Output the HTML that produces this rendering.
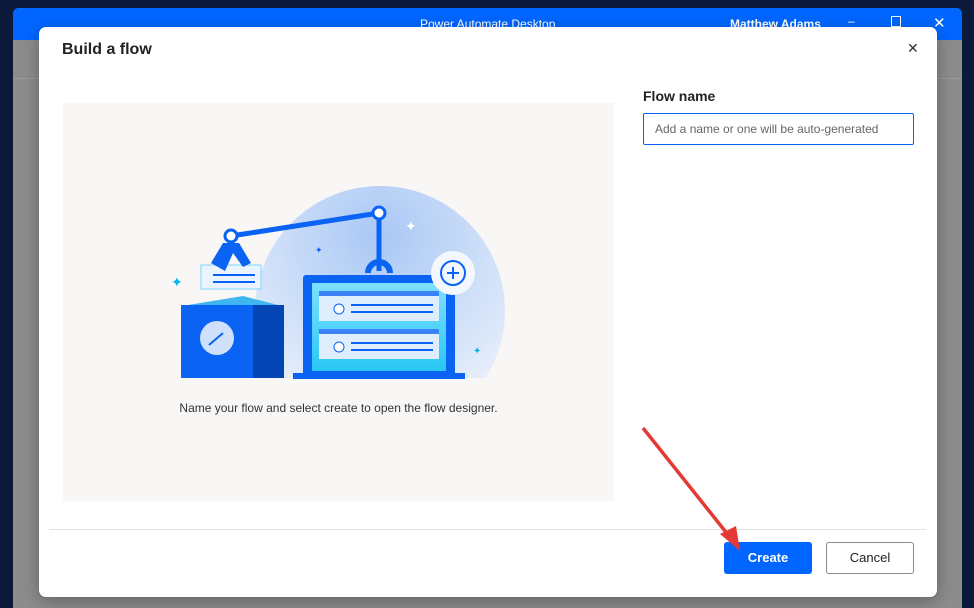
<!DOCTYPE html>
<html><head><style>
*{margin:0;padding:0;box-sizing:border-box}
body{width:974px;height:599px;overflow:hidden;background:#0b1a3a;font-family:"Segoe UI","Liberation Sans",sans-serif;position:relative}
.win{position:absolute;left:13px;top:8px;width:949px;height:600px;background:#8c8c8c;border-radius:6px 6px 0 0;overflow:hidden}
.tb{height:32px;background:#0066ff;color:#fff;font-size:12px;position:relative}
.dlg{position:absolute;left:39px;top:27px;width:898px;height:570px;background:#fff;border-radius:7px;box-shadow:0 4px 16px rgba(0,0,0,.3)}
</style></head><body>
<div class="win">
 <div class="tb">
  <span style="position:absolute;left:407px;top:9px">Power Automate Desktop</span>
  <span style="position:absolute;left:717px;top:9px;font-weight:600">Matthew Adams</span>
  <span style="position:absolute;left:835px;top:6px">–</span>
  <span style="position:absolute;left:878px;top:8px;width:10px;height:11px;border:1px solid #fff"></span>
  <span style="position:absolute;left:920px;top:6px;font-size:15px">✕</span>
 </div>
 <div style="position:absolute;left:0;top:70px;width:100%;height:1px;background:#9a9a9a"></div>
</div>
<div class="dlg">
 <div style="position:absolute;left:23px;top:14px;font-size:16px;font-weight:600;color:#222">Build a flow</div>
 <div style="position:absolute;left:868px;top:13px;font-size:14px;color:#333;font-weight:300">✕</div>
 <div style="position:absolute;left:24px;top:76px;width:551px;height:398px;background:#f8f7f6">
  <svg width="551" height="300" viewBox="0 0 551 300" style="position:absolute;left:0;top:0">
   <defs><radialGradient id="g" cx="50%" cy="20%" r="80%"><stop offset="0" stop-color="#a9c8f5"/><stop offset="1" stop-color="#eef3fb"/></radialGradient>
   <linearGradient id="s" x1="0" y1="0" x2="0" y2="1"><stop offset="0" stop-color="#7fe0ff"/><stop offset="1" stop-color="#28c7f4"/></linearGradient></defs>
   <circle cx="317" cy="208" r="125" fill="url(#g)"/>
   <rect x="0" y="275" width="551" height="30" fill="#f8f7f6"/>
   <line x1="168" y1="133" x2="316" y2="110" stroke="#0a63f2" stroke-width="5"/>
   <line x1="316" y1="110" x2="316" y2="168" stroke="#0a63f2" stroke-width="5"/>
   <circle cx="316" cy="110" r="6" fill="#fff" stroke="#0a63f2" stroke-width="3"/>
   <circle cx="168" cy="133" r="6" fill="#fff" stroke="#0a63f2" stroke-width="3"/>
   <path d="M305 170a11 11 0 0 1 22 0" fill="none" stroke="#0a63f2" stroke-width="6"/>
   <rect x="240" y="172" width="152" height="104" rx="3" fill="#0a63f2"/>
   <rect x="249" y="180" width="134" height="88" fill="url(#s)"/>
   <rect x="230" y="270" width="172" height="6" fill="#0a63f2"/>
   <rect x="256" y="188" width="120" height="30" fill="#dfeefc"/><rect x="256" y="188" width="120" height="5" fill="#3b82f6"/>
   <circle cx="276" cy="206" r="5" fill="#fff" stroke="#0a63f2"/><line x1="288" y1="202" x2="370" y2="202" stroke="#0a63f2" stroke-width="2"/><line x1="288" y1="209" x2="370" y2="209" stroke="#0a63f2" stroke-width="2"/>
   <rect x="256" y="226" width="120" height="30" fill="#dfeefc"/><rect x="256" y="226" width="120" height="5" fill="#3b82f6"/>
   <circle cx="276" cy="244" r="5" fill="#fff" stroke="#0a63f2"/><line x1="288" y1="240" x2="370" y2="240" stroke="#0a63f2" stroke-width="2"/><line x1="288" y1="247" x2="370" y2="247" stroke="#0a63f2" stroke-width="2"/>
   <circle cx="390" cy="170" r="22" fill="#f4f8fe"/><circle cx="390" cy="170" r="12" fill="none" stroke="#0a63f2" stroke-width="2"/><path d="M384 170h12M390 164v12" stroke="#0a63f2" stroke-width="2"/>
   <rect x="118" y="202" width="103" height="73" fill="#0a63f2"/><rect x="190" y="202" width="31" height="73" fill="#0445b5"/>
   <polygon points="125,202 180,193 215,202" fill="#3fb6ef"/>
   <circle cx="154" cy="235" r="17" fill="#cfe0fb"/><path d="M146 242l14-12" stroke="#0a63f2" stroke-width="2"/>
   <rect x="138" y="162" width="60" height="24" fill="#eaf4ff" stroke="#7dd3fc"/><line x1="150" y1="172" x2="192" y2="172" stroke="#0a63f2" stroke-width="2"/><line x1="150" y1="179" x2="192" y2="179" stroke="#0a63f2" stroke-width="2"/>
   <polygon points="160,140 176,140 188,160 180,164 170,150 162,168 148,160" fill="#0a63f2"/>
   <text x="108" y="184" fill="#00b7f1" font-size="14">✦</text>
   <text x="342" y="128" fill="#fff" font-size="14">✦</text>
   <text x="252" y="150" fill="#0a63f2" font-size="9">✦</text>
   <text x="410" y="251" fill="#00b7f1" font-size="10">✦</text>
  </svg>
  <div style="position:absolute;left:0;width:100%;top:298px;text-align:center;font-size:12px;color:#333">Name your flow and select create to open the flow designer.</div>
 </div>
 <div style="position:absolute;left:604px;top:61px;font-size:14px;font-weight:600;color:#222">Flow name</div>
 <div style="position:absolute;left:604px;top:86px;width:271px;height:32px;border:1px solid #0a63f2;border-radius:2px;font-size:12px;color:#666;padding:8px 11px">Add a name or one will be auto-generated</div>
 <div style="position:absolute;left:10px;top:502px;width:877px;height:1px;background:#e3e3e3"></div>
 <div style="position:absolute;left:685px;top:515px;width:88px;height:32px;background:#0066ff;border-radius:3px;color:#fff;font-size:13px;font-weight:600;text-align:center;line-height:32px">Create</div>
 <div style="position:absolute;left:787px;top:515px;width:88px;height:32px;border:1px solid #8a8a8a;border-radius:3px;color:#222;font-size:13px;text-align:center;line-height:30px">Cancel</div>
</div>
<svg width="974" height="599" style="position:absolute;left:0;top:0">
 <line x1="643" y1="428" x2="733" y2="541" stroke="#e53935" stroke-width="3.5"/>
 <polygon points="740,551 720,534 736,526" fill="#e53935"/>
</svg>
</body></html>
